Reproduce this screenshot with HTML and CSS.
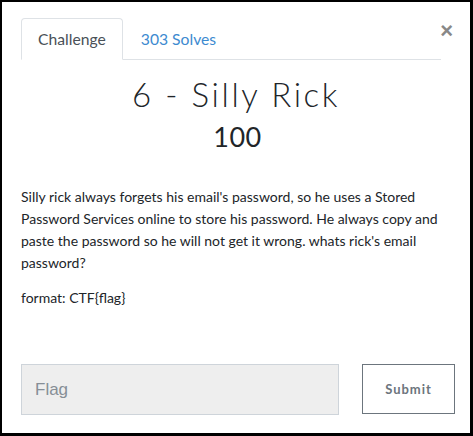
FILE: index.html
```html
<!DOCTYPE html>
<html>
<head>
<meta charset="utf-8">
<link rel="stylesheet" href="styles.css">
</head>
<body>
<div class="frame">
  <div class="modal">
    <div class="nav-row">
      <ul class="tabs">
        <li class="tab active">Challenge</li>
        <li class="tab link">303 Solves</li>
      </ul>
      <span class="close">&times;</span>
    </div>
    <h2 class="title">6 - Silly Rick</h2>
    <h3 class="value">100</h3>
    <div class="desc">
      <p>Silly rick always forgets his email's password, so he uses a Stored Password Services online to store his password. He always copy and paste the password so he will not get it wrong. whats rick's email password?</p>
      <p>format: CTF{flag}</p>
    </div>
    <form class="submit-row">
      <input class="flag" type="text" placeholder="Flag">
      <button class="btn" type="button">Submit</button>
    </form>
  </div>
</div>
</body>
</html>
```
FILE: styles.css
```css
html, body { margin: 0; padding: 0; background: #000; }
.frame {
  box-sizing: border-box;
  width: 473px;
  height: 436px;
  border-style: solid;
  border-color: #000;
  border-width: 2px 3px 3px 2px;
  background: #fff;
  font-family: Lato, "Liberation Sans", sans-serif;
  color: #212529;
}
.modal { padding: 16px 29px 0 19px; position: relative; }
.nav-row { position: relative; }
.tabs {
  list-style: none;
  margin: 0;
  padding: 0;
  display: flex;
  border-bottom: 1px solid #dee2e6;
}
.tab {
  font-size: 15.7px;
  line-height: 22px;
  padding: 9px 16px 9px 16px;
  margin-bottom: -1px;
  border: 1px solid transparent;
  border-radius: 4px 4px 0 0;
}
.tab.active {
  color: #495057;
  border-color: #dee2e6 #dee2e6 #fff;
  background: #fff;
}
.tab.link { color: #3d8ad0; padding-left: 17px; }
.close {
  position: absolute;
  right: -12px;
  top: 2px;
  font-family: "Liberation Sans", Arial, sans-serif;
  font-size: 22px;
  font-weight: 700;
  color: #888;
  line-height: 22px;
}
.title {
  margin: 14px -29px 0 -19px;
  text-align: center;
  font-size: 33px;
  font-weight: 300;
  letter-spacing: 2.6px;
  line-height: 40px;
  color: #212529;
}
.value {
  margin: 5px -29px 0 -19px;
  text-align: center;
  font-size: 27px;
  font-weight: 400;
  letter-spacing: 0.5px;
  line-height: 36px;
  color: #212529;
  padding-left: 3px;
}
.desc { margin-top: 31px; font-size: 14px; line-height: 22px; color: #212529; }
.desc p { margin: 0 0 13px; }
.submit-row {
  display: flex;
  justify-content: space-between;
  margin-top: 55px;
  margin-right: -14px;
  margin-left: 0;
}
.flag {
  box-sizing: border-box;
  width: 318px;
  height: 51px;
  border: 1px solid #ced4da;
  background: #eee;
  padding: 0 13px;
  font-family: "Liberation Sans", Arial, sans-serif;
  font-size: 17px;
  color: #495057;
  outline: none;
}
.flag::placeholder { color: #868e96; }
.btn {
  box-sizing: border-box;
  width: 93px;
  height: 50px;
  border: 1px solid #6c757d;
  background: #fff;
  color: #6c757d;
  font-family: Lato, "Liberation Sans", sans-serif;
  font-weight: 700;
  font-size: 13px;
  letter-spacing: 1px;
}
```
